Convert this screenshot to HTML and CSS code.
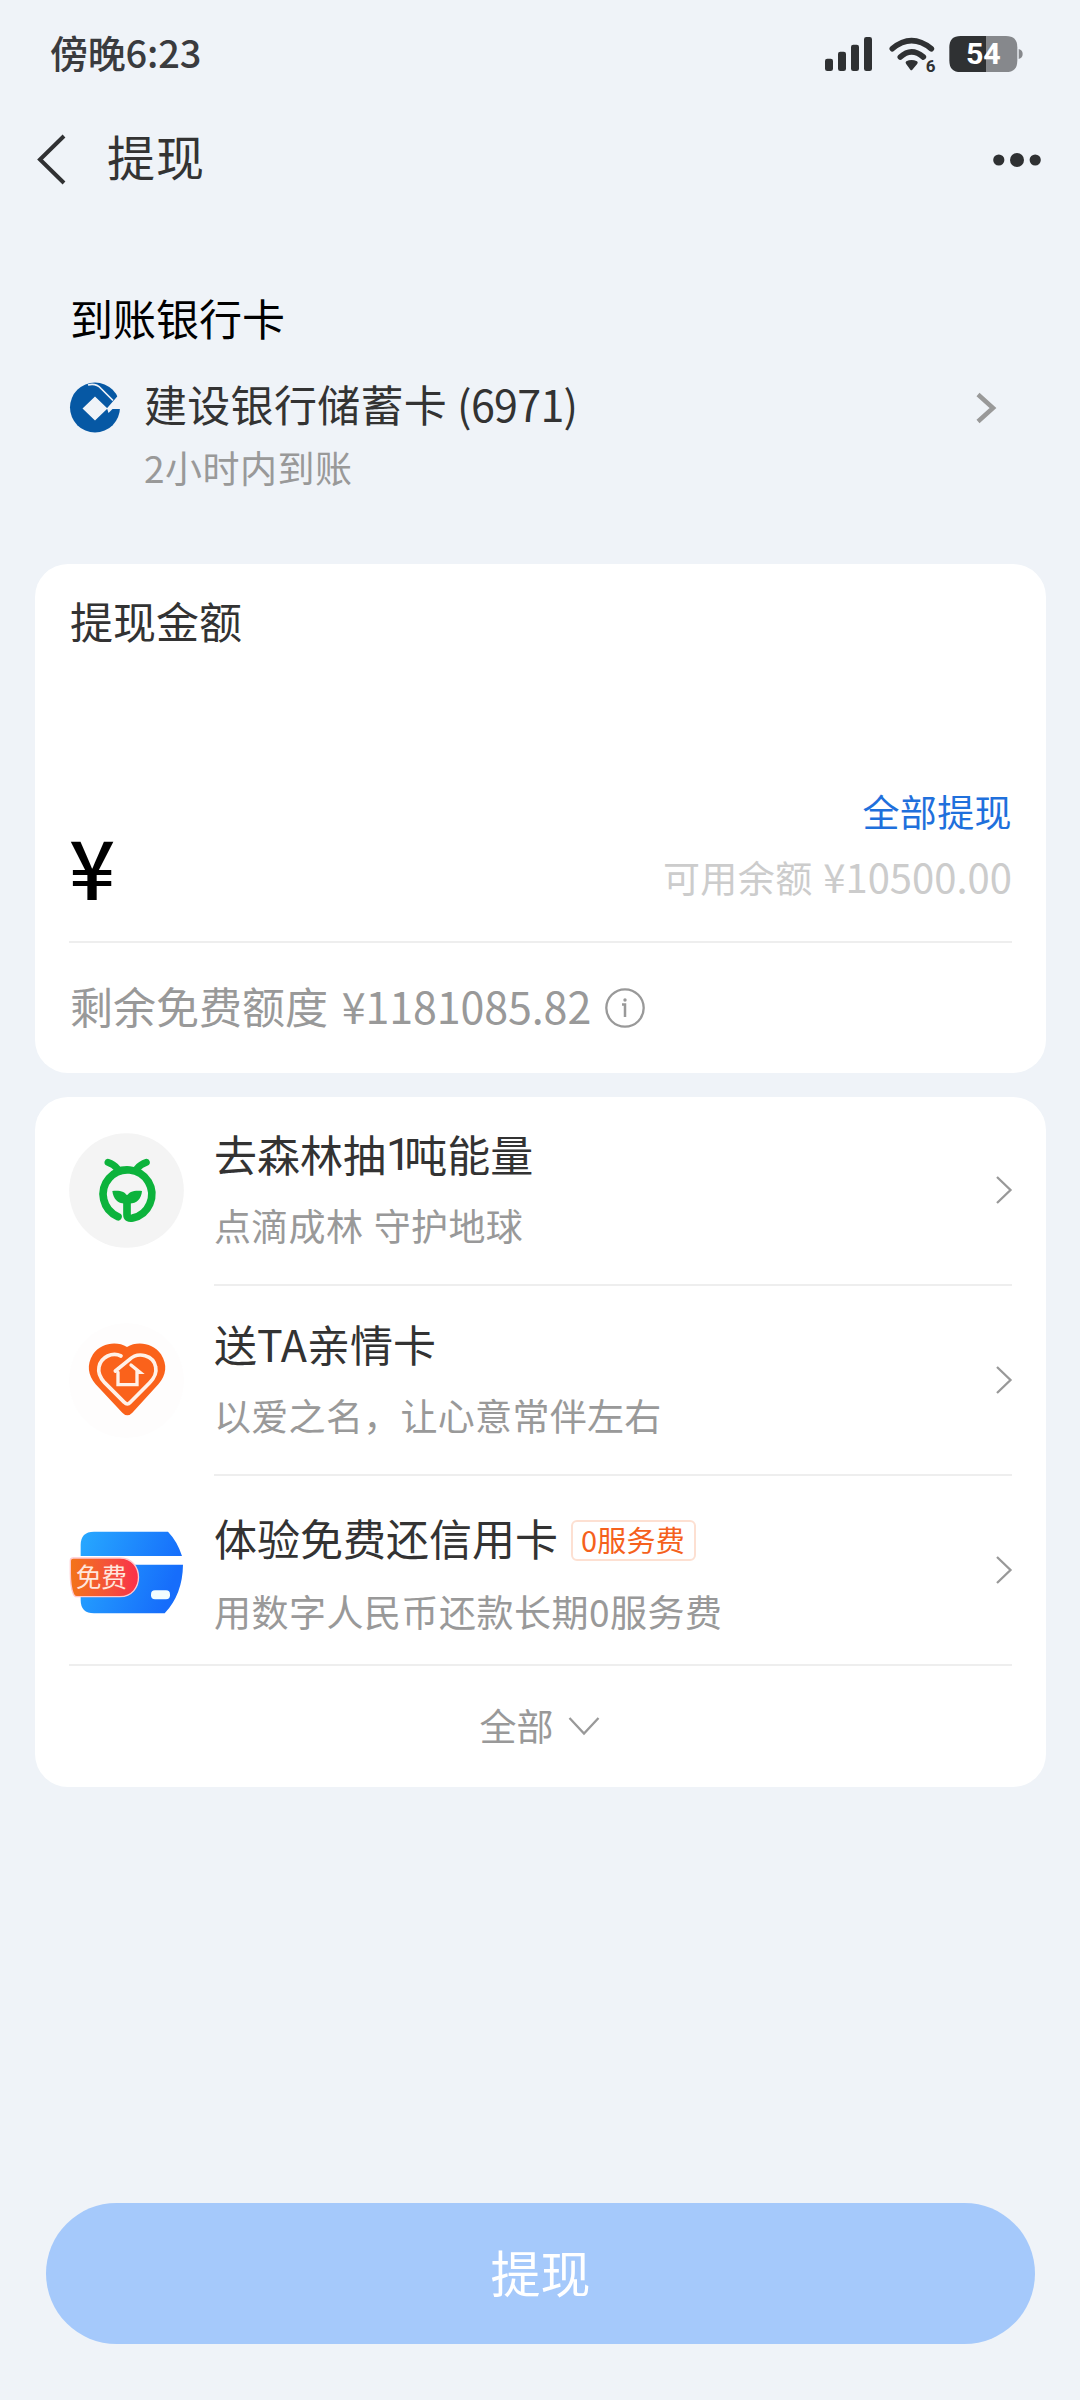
FILE: index.html
```html
<!DOCTYPE html>
<html lang="zh-CN">
<head>
<meta charset="utf-8">
<title>提现</title>
<link rel="stylesheet" href="styles.css">
</head>
<body>
<header class="status">
  <span class="status-time">傍晚6:23</span>
  <div class="status-icons">
    <svg class="signal" width="47" height="34" viewBox="135 111 141 102" fill="#2f3133">
      <rect x="135" y="176" width="24" height="37" rx="7"/>
      <rect x="174" y="155" width="24" height="58" rx="7"/>
      <rect x="213" y="134" width="24" height="79" rx="7"/>
      <rect x="252" y="111" width="24" height="102" rx="7"/>
    </svg>
    <svg class="wifi" width="47" height="37" viewBox="327 108 141 111">
      <path d="M337 146Q394 98 454 146" fill="none" stroke="#2f3133" stroke-width="17" stroke-linecap="round"/>
      <path d="M361 171Q394 140 430 171" fill="none" stroke="#2f3133" stroke-width="17" stroke-linecap="round"/>
      <path d="M378 191Q375 187 379 184Q394 176 411 184Q415 187 412 191L397 209Q394 212 391 209Z" fill="#2f3133"/>
      <text class="wifi-gen" x="437" y="216">6</text>
    </svg>
    <svg class="battery" width="74" height="36" viewBox="507 108 222 108">
      <path d="M618 108H542Q508 108 508 142V182Q508 216 542 216H618Z" fill="#2f3133"/>
      <path d="M618 108H678Q712 108 712 142V182Q712 216 678 216H618Z" fill="#86888c"/>
      <path d="M716 147Q728 150 728 162Q728 174 716 177Z" fill="#86888c"/>
      <text class="battery-level" x="610" y="193" text-anchor="middle">54</text>
    </svg>
  </div>
</header>

<nav class="nav">
  <svg class="back" width="30" height="50" viewBox="0 0 30 50"><path d="M27 2L3 25.500L27 49" fill="none" stroke="#303133" stroke-width="4"/></svg>
  <h1 class="nav-title">提现</h1>
  <svg class="more" width="48" height="16" viewBox="0 0 48 16" fill="#2f3133"><circle cx="5.800" cy="8" r="5.600"/><circle cx="24" cy="8" r="7"/><circle cx="42.200" cy="8" r="5.600"/></svg>
</nav>

<section class="bank">
  <h2 class="bank-heading">到账银行卡</h2>
  <div class="bank-row">
    <svg class="bank-logo" width="50" height="51" viewBox="0 0 50 51">
      <circle cx="25" cy="25.500" r="25" fill="#0658a4"/>
      <path d="M25 14.500L37.500 26.500L25 38.500L12.500 26.500Z M37 26.200L48.500 13L52 10V27H42.500L38.500 31Z" fill="#eff3f8"/>
      <path d="M18 3Q26 1 31 6.500L43 18.500" fill="none" stroke="#eff3f8" stroke-width="1.700"/>
    </svg>
    <div class="bank-name">建设银行储蓄卡 <span class="bank-digits">(6971)</span></div>
    <svg class="bank-arrow" width="22" height="30" viewBox="0 0 22 30"><path d="M2 1.500L17 15L2 28.500" fill="none" stroke="#999" stroke-width="4.500"/></svg>
  </div>
  <p class="bank-note">2小时内到账</p>
</section>

<main class="cards">
  <section class="card amount">
    <h2 class="amount-title">提现金额</h2>
    <div class="amount-entry">
      <span class="amount-symbol">¥</span>
      <div class="amount-side">
        <a class="withdraw-all">全部提现</a>
        <span class="balance">可用余额 <span class="balance-value">¥10500.00</span></span>
      </div>
    </div>
    <div class="quota">
      <span class="quota-label">剩余免费额度 <span class="quota-value">¥1181085.82</span></span>
      <svg class="info" width="40" height="40" viewBox="0 0 40 40"><circle cx="20" cy="20" r="18.700" fill="none" stroke="#999" stroke-width="2.300"/><circle cx="20" cy="12" r="1.700" fill="#999"/><path d="M17 16.500H20V29" fill="none" stroke="#999" stroke-width="2.500"/></svg>
    </div>
  </section>

  <section class="card promos">
    <article class="promo promo-forest">
      <svg class="promo-icon" width="115" height="115" viewBox="27 39 345 345">
        <circle cx="199.500" cy="211.500" r="172" fill="#f4f4f4"/>
        <g fill="none" stroke="#0db33c" stroke-width="23" stroke-linecap="round" stroke-linejoin="round">
          <path d="M174 290A73 73 0 1 1 218 294Q201 297 201 284V236"/>
          <path d="M144 127Q161 132 172 146M259 127Q242 132 231 146" stroke-width="21"/>
        </g>
        <path d="M201 230C197 214 179 211 157 213C160 240 178 254 201 250C226 254 244 240 246 213C223 211 206 214 201 230Z" fill="#0db33c"/>
      </svg>
      <div class="promo-body">
        <h3 class="promo-title">去森林抽<span class="tight">1</span>吨能量</h3>
        <p class="promo-sub">点滴成林 守护地球</p>
        <svg class="promo-arrow" width="18" height="30" viewBox="0 0 18 30"><path d="M2 2L15.500 15L2 28" fill="none" stroke="#999" stroke-width="2.300"/></svg>
      </div>
    </article>

    <article class="promo promo-family">
      <svg class="promo-icon" width="115" height="115" viewBox="27 609 345 345">
        <circle cx="199.500" cy="781.500" r="172" fill="#fefdfd"/>
        <path d="M201 681C170 662 122 669 99 703C79 735 84 765 107 793L187 878Q202 894 217 878L295 793C319 765 323 735 303 703C280 669 232 662 201 681Z" fill="#fa621b"/>
        <g fill="none" stroke="#fff1e8" stroke-linecap="round">
          <path d="M183 708C158 695 123 710 117 741C113 760 122 775 134 788L193 847Q202 857 211 847L269 788C282 775 291 760 287 741C281 706 235 693 208 719L166 753" stroke-width="11"/>
          <path d="M174 757V794H231V757H240L213 735" stroke-width="10"/>
        </g>
      </svg>
      <div class="promo-body">
        <h3 class="promo-title">送TA亲情卡</h3>
        <p class="promo-sub">以爱之名，让心意常伴左右</p>
        <svg class="promo-arrow" width="18" height="30" viewBox="0 0 18 30"><path d="M2 2L15.500 15L2 28" fill="none" stroke="#999" stroke-width="2.300"/></svg>
      </div>
    </article>

    <article class="promo promo-credit">
      <svg class="promo-icon" width="115" height="115" viewBox="27 1179 345 345">
        <defs>
          <linearGradient id="card-blue" x1="0" y1="0" x2="1" y2="0.300"><stop offset="0" stop-color="#27a9ff"/><stop offset="1" stop-color="#166dfb"/></linearGradient>
          <linearGradient id="free-red" x1="0" y1="0" x2="1" y2="0"><stop offset="0" stop-color="#f37419"/><stop offset="0.600" stop-color="#f4503c"/><stop offset="1" stop-color="#fb2f49"/></linearGradient>
        </defs>
        <path d="M102 1235H324Q352 1264 366 1308H62V1275Q62 1235 102 1235ZM62 1334H369Q368 1422 314 1480H102Q62 1480 62 1440Z" fill="url(#card-blue)"/>
        <rect x="273" y="1411" width="57" height="27" rx="12" fill="#f3fdff"/>
        <path d="M40 1314H180C254 1314 254 1430 180 1430H50Q43 1430 40 1422Q31 1400 31 1360V1322Q31 1314 40 1314Z" fill="url(#free-red)" stroke="#ffc9cf" stroke-width="4"/>
        <text class="free-text" x="47" y="1401">免费</text>
      </svg>
      <div class="promo-body">
        <h3 class="promo-title">体验免费还信用卡<span class="tag">0服务费</span></h3>
        <p class="promo-sub">用数字人民币还款长期0服务费</p>
        <svg class="promo-arrow" width="18" height="30" viewBox="0 0 18 30"><path d="M2 2L15.500 15L2 28" fill="none" stroke="#999" stroke-width="2.300"/></svg>
      </div>
    </article>

    <div class="expand">
      <span>全部</span>
      <svg width="32" height="20" viewBox="0 0 32 20"><path d="M1.500 2L16 17.500L30.500 2" fill="none" stroke="#999" stroke-width="2.300"/></svg>
    </div>
  </section>
</main>

<button class="submit" type="button">提现</button>
</body>
</html>
```
FILE: styles.css
```css
* {
  box-sizing: border-box;
  margin: 0;
  padding: 0;
}

body {
  display: flex;
  flex-direction: column;
  width: 1080px;
  height: 2400px;
  background: #eff3f8;
  color: #333;
  font-family: "Noto Sans CJK SC", sans-serif;
  font-size: 43px;
  line-height: 44px;
}

h1, h2, h3 {
  font-size: inherit;
  font-weight: 400;
}

svg {
  display: block;
  flex: none;
  overflow: visible;
}

.status {
  display: flex;
  justify-content: space-between;
  height: 108px;
  padding: 30px 57px 0 50px;
}

.status-time {
  font-size: 38px;
  font-weight: 500;
  letter-spacing: -0.2px;
  color: #3a3b3e;
}

.status-icons {
  display: flex;
  padding-top: 6px;
}

.signal {
  margin: 1px 17px 0 0;
}

.wifi {
  margin-right: 13px;
}

.wifi-gen {
  font: 700 51px Roboto, sans-serif;
  fill: #2f3133;
}

.battery-level {
  font: 700 91px Roboto, sans-serif;
  fill: #fff;
}

.nav {
  display: flex;
  align-items: center;
  height: 102px;
  padding: 0 39px 0 37px;
}

.nav-title {
  flex: 1;
  padding: 0 0 9px 40px;
  font-size: 48px;
  letter-spacing: 1px;
}

.more {
  margin-top: 2px;
}

.bank {
  height: 354px;
  padding: 85px 82px 0 70px;
}

.bank-heading {
  color: #000;
}

.bank-row {
  display: flex;
  align-items: flex-start;
  height: 44px;
  margin-top: 42px;
}

.bank-logo {
  margin-top: 1px;
}

.bank-name {
  flex: 1;
  padding-left: 24px;
  letter-spacing: 0.3px;
}

.bank-digits {
  letter-spacing: -0.7px;
}

.bank-arrow {
  margin-top: 12px;
}

.bank-note {
  margin-top: 23px;
  padding-left: 74px;
  font-size: 37px;
  line-height: 38px;
  letter-spacing: 0.5px;
  color: #999;
}

.cards {
  display: flex;
  flex-direction: column;
  gap: 24px;
  padding: 0 34px 0 35px;
}

.card {
  border-radius: 33px;
  background: #fff;
  padding: 0 34px;
}

.amount {
  height: 509px;
  padding-top: 34px;
}

.amount-title {
  padding-left: 1px;
}

.amount-entry {
  display: flex;
  justify-content: space-between;
  align-items: flex-end;
  height: 301px;
  padding-bottom: 31px;
  border-bottom: 2px solid #eee;
}

.amount-symbol {
  padding-bottom: 5px;
  font-size: 81px;
  font-weight: 500;
  line-height: 80px;
  color: #000;
}

.amount-side {
  display: flex;
  flex-direction: column;
  align-items: flex-end;
  font-size: 37px;
  line-height: 65px;
  letter-spacing: 0.4px;
}

.withdraw-all {
  color: #1f70dc;
}

.balance {
  word-spacing: 2px;
  color: #ccc;
}

.balance-value {
  font-size: 40px;
  letter-spacing: 0;
}

.quota {
  display: flex;
  align-items: center;
  gap: 14px;
  height: 130px;
  color: #999;
}

.quota-label {
  padding: 0 0 7px 1px;
  word-spacing: 4px;
}

.quota-value {
  letter-spacing: -0.1px;
}

.promos {
  height: 690px;
}

.promo {
  display: flex;
  gap: 30px;
  height: 190px;
}

.promo-icon {
  margin-top: 37px;
}

.promo-body {
  display: grid;
  flex: 1;
  grid-template-columns: 1fr auto;
  align-content: start;
  padding-top: 35px;
  border-bottom: 2px solid #eee;
}

.promo-title {
  display: flex;
  align-items: center;
  height: 44px;
}

.tight {
  padding-top: 3px;
  font-family: Roboto, sans-serif;
  font-size: 45px;
  letter-spacing: -7px;
}

.promo-sub {
  grid-column: 1;
  margin-top: 31px;
  font-size: 37px;
  line-height: 38px;
  letter-spacing: 0.3px;
  word-spacing: 2px;
  color: #999;
}

.promo-arrow {
  grid-column: 2;
  grid-row: 1 / 3;
  align-self: center;
  margin: 4px -1px 0 0;
}

.promo-forest {
  height: 189px;
}

.promo-forest .promo-icon {
  margin-top: 36px;
}

.promo-forest .promo-body {
  padding-top: 34px;
}

.promo-credit {
  border-bottom: 2px solid #eee;
}

.promo-credit .promo-body {
  padding-top: 39px;
  border-bottom: 0;
}

.promo-credit .promo-sub {
  margin-top: 33px;
  letter-spacing: 0.5px;
}

.promo-credit .promo-arrow {
  margin-top: -6px;
}

.tag {
  height: 41px;
  margin: 6px 0 0 13px;
  padding: 0 9px 0 8px;
  border: 2px solid #fde0d2;
  border-radius: 6px;
  font-size: 29px;
  line-height: 35px;
  letter-spacing: 0.2px;
  color: #f5611c;
}

.free-text {
  font: 400 77px "Noto Sans CJK SC", sans-serif;
  fill: #ffe6dc;
}

.expand {
  display: flex;
  justify-content: center;
  align-items: center;
  gap: 14px;
  height: 121px;
  padding: 0 2px 1px 0;
  font-size: 37px;
  color: #999;
}

.expand span {
  padding-bottom: 3px;
}

.submit {
  height: 141px;
  margin: auto 45px 56px 46px;
  padding-bottom: 5px;
  border: 0;
  border-radius: 71px;
  background: #a5c9fb;
  font: 400 50px "Noto Sans CJK SC", sans-serif;
  color: #fff;
}
```
